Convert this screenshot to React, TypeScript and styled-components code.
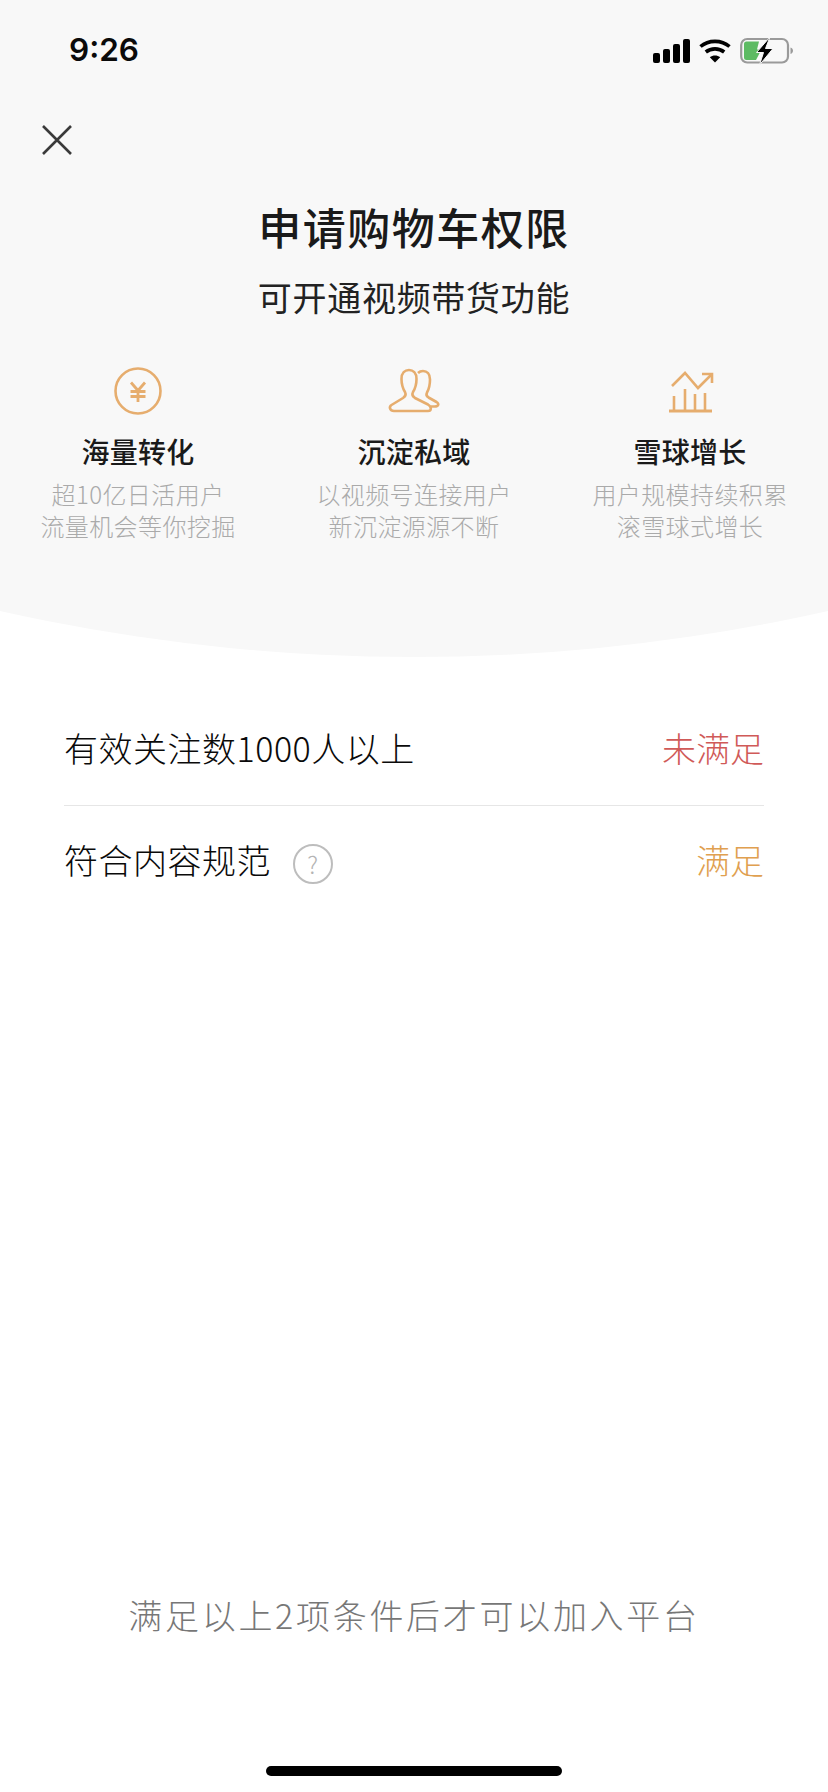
import React from 'react';
import styled, { createGlobalStyle } from 'styled-components';

const CJK = `"Noto Sans CJK SC", "Noto Sans", sans-serif`;
const ORANGE = '#e6ad6e';

const GlobalStyle = createGlobalStyle`
  html, body {
    margin: 0;
    padding: 0;
    background: #fff;
  }
  body {
    font-family: ${CJK};
  }
`;

const Page = styled.div`
  width: 828px;
  height: 1792px;
  background: #fff;
  overflow: hidden;
  display: flex;
  flex-direction: column;
`;

/* the bottom edge is one big circle: sags 46px over the page width */
const Hero = styled.header`
  height: 657px;
  flex-shrink: 0;
  background: #f8f8f8;
  clip-path: circle(1886px at 50% -1229px);
`;

const StatusBar = styled.div`
  height: 100px;
  padding: 31px 34px 0 69px;
  box-sizing: border-box;
  display: flex;
  justify-content: space-between;
  align-items: flex-start;
`;

const Clock = styled.span`
  font-family: Inter, "Liberation Sans", sans-serif;
  font-weight: 600;
  font-size: 31.5px;
  line-height: 38px;
  color: #0a0a0a;
`;

const StatusIcons = styled.div`
  display: flex;
  align-items: center;
  gap: 9px;
  margin-top: 6px;
`;

const CloseButton = styled.button`
  display: block;
  margin: 23px 0 0 40px;
  padding: 0;
  width: 34px;
  height: 34px;
  border: 0;
  background: none;
`;

const Title = styled.h1`
  margin: 37px 0 0;
  text-align: center;
  font-size: 43px;
  line-height: 64px;
  font-weight: 500;
  letter-spacing: 1.5px;
  color: #1a1a1a;
`;

const Subtitle = styled.p`
  margin: 14px 0 0;
  text-align: center;
  font-size: 34px;
  line-height: 50px;
  font-weight: 400;
  letter-spacing: 0.7px;
  color: #222;
`;

const Features = styled.div`
  display: grid;
  grid-template-columns: repeat(3, 276px);
  margin-top: 43px;
`;

const Feature = styled.div`
  display: flex;
  flex-direction: column;
  align-items: center;
`;

const FeatureIcon = styled.svg`
  display: block;
  width: 56px;
  height: 52px;
`;

const FeatureTitle = styled.h2`
  margin: 13px 0 0;
  font-size: 28px;
  line-height: 42px;
  font-weight: 500;
  letter-spacing: 0.2px;
  color: #1a1a1a;
`;

const FeatureText = styled.p`
  margin: 6px 0 0;
  font-size: 24px;
  line-height: 32px;
  font-weight: 300;
  letter-spacing: 0.4px;
  text-align: center;
  color: #aaa;
`;

const Conditions = styled.section`
  margin: 0 64px;
  padding-top: 38px;
`;

const Row = styled.div<{ $divided?: boolean }>`
  height: 111px;
  padding-bottom: 5px;
  display: flex;
  align-items: center;
  justify-content: space-between;
  border-bottom: ${(p) => (p.$divided ? '1px solid #e6e6e6' : '0')};
  box-sizing: border-box;
`;

const RowLabel = styled.div`
  display: flex;
  align-items: center;
  font-size: 34px;
  font-weight: 300;
  letter-spacing: 0.5px;
  color: #0a0a0a;
`;

const HelpIcon = styled.span`
  width: 36px;
  height: 36px;
  margin: 9px 0 0 22px;
  border: 2px solid #bdbdbd;
  border-radius: 50%;
  display: flex;
  align-items: center;
  justify-content: center;
  font-size: 24px;
  line-height: 1;
  color: #b4b4b4;
`;

const Status = styled.span<{ $met?: boolean }>`
  font-size: 34px;
  font-weight: 300;
  color: ${(p) => (p.$met ? '#e0a050' : '#d05a58')};
`;

const Footer = styled.div`
  margin-top: auto;
  padding-bottom: 16px;
  display: flex;
  flex-direction: column;
  align-items: center;
`;

const Hint = styled.p`
  margin: 0 0 126px;
  font-size: 34px;
  line-height: 50px;
  font-weight: 300;
  letter-spacing: 2.7px;
  color: #777;
`;

const HomeBar = styled.div`
  width: 296px;
  height: 10px;
  border-radius: 5px;
  background: #000;
`;

const Signal = () => (
  <svg width="38" height="24" viewBox="0 0 38 24" fill="#000">
    <rect x="1" y="14" width="7" height="10" rx="2" />
    <rect x="11" y="10" width="7" height="14" rx="2" />
    <rect x="21" y="5" width="7" height="19" rx="2" />
    <rect x="31" y="0" width="7" height="24" rx="2" />
  </svg>
);

const Wifi = () => (
  <svg width="32" height="24" viewBox="0 0 32 24" fill="none" stroke="#000" strokeWidth="3.6">
    <path d="M1.5 7.5C9.5 0.6 22.5 0.6 30.5 7.5" />
    <path d="M6.8 13C12 8.8 20 8.8 25.2 13" />
    <path d="M16 23.5L10.8 18.3C13.8 15.8 18.2 15.8 21.2 18.3Z" fill="#000" stroke="none" />
  </svg>
);

const Battery = () => (
  <svg width="54" height="28" viewBox="0 0 54 28" fill="none">
    <rect x="1.2" y="2" width="46.8" height="23.5" rx="6" stroke="#9a9a9a" strokeWidth="2.2" />
    <path d="M4 7a2.5 2.5 0 0 1 2.5-2.5H19l-2 8h4.5L16 23H6.5A2.5 2.5 0 0 1 4 20.5Z" fill="#5dbb63" />
    <path d="M50.5 10.5c1.6.5 2.5 1.7 2.5 3.2s-.9 2.7-2.5 3.2Z" fill="#9a9a9a" />
    <path d="M30 0L16.5 15.5H23.5L19.5 28L33 11.5H25.5Z" fill="#000" stroke="#f8f8f8" strokeWidth="1" />
  </svg>
);

const CloseIcon = () => (
  <svg width="34" height="34" viewBox="0 0 34 34" fill="none" stroke="#3a3a3a" strokeWidth="2.6">
    <path d="M3 3L31 31M31 3L3 31" />
  </svg>
);

const CoinIcon = () => (
  <FeatureIcon viewBox="0 0 56 52" fill="none" stroke={ORANGE} strokeWidth="2.6">
    <circle cx="28" cy="26" r="22.5" />
    <path d="M21 17.5L28 25.5L35 17.5M20.5 26.5H35.5M20.5 31.5H35.5M28 25.5V37" strokeWidth="2.8" />
  </FeatureIcon>
);

const PeopleIcon = () => (
  <FeatureIcon viewBox="0 0 56 52" fill="none" stroke={ORANGE} strokeWidth="2.6" strokeLinejoin="round">
    <path d="M8 46C4 46 2.5 42 5.5 40L17 33C20 31 20 29 19 27C16.5 23 15.5 19 15.5 14C15.5 8 19 5 23 5C27 5 30.5 8 30.5 14C30.5 19 29.5 23 27 27C26 29 26 31 29 33L42 39.5C46 42 45.5 46 42 46Z" />
    <path d="M32 8C33.5 6.5 35 6 37 6C41 6 44 9 44 14.5C44 20 43 24 41 27.5C40 29.5 40 31 42.5 32.5L50.5 37C53.5 39 52.5 41.5 48.5 41.5H44.5" />
  </FeatureIcon>
);

const GrowthIcon = () => (
  <FeatureIcon viewBox="0 0 56 52" fill="none" stroke={ORANGE} strokeWidth="2.6">
    <path d="M10 21L23 8L36 23L50 9" />
    <path d="M40 9H50V18" />
    <path d="M12 31V45M23 24V45M33 29V45M43 28V45" />
    <path d="M7 46H50" strokeWidth="3" />
  </FeatureIcon>
);

const features = [
  { icon: <CoinIcon />, title: '海量转化', lines: ['超10亿日活用户', '流量机会等你挖掘'] },
  { icon: <PeopleIcon />, title: '沉淀私域', lines: ['以视频号连接用户', '新沉淀源源不断'] },
  { icon: <GrowthIcon />, title: '雪球增长', lines: ['用户规模持续积累', '滚雪球式增长'] },
];

export default function App() {
  return (
    <Page>
      <GlobalStyle />
      <Hero>
        <StatusBar>
          <Clock>9:26</Clock>
          <StatusIcons>
            <Signal />
            <Wifi />
            <Battery />
          </StatusIcons>
        </StatusBar>
        <CloseButton aria-label="关闭">
          <CloseIcon />
        </CloseButton>
        <Title>申请购物车权限</Title>
        <Subtitle>可开通视频带货功能</Subtitle>
        <Features>
          {features.map((f) => (
            <Feature key={f.title}>
              {f.icon}
              <FeatureTitle>{f.title}</FeatureTitle>
              <FeatureText>
                {f.lines[0]}
                <br />
                {f.lines[1]}
              </FeatureText>
            </Feature>
          ))}
        </Features>
      </Hero>
      <Conditions>
        <Row $divided>
          <RowLabel>有效关注数1000人以上</RowLabel>
          <Status>未满足</Status>
        </Row>
        <Row>
          <RowLabel>
            符合内容规范
            <HelpIcon>?</HelpIcon>
          </RowLabel>
          <Status $met>满足</Status>
        </Row>
      </Conditions>
      <Footer>
        <Hint>满足以上2项条件后才可以加入平台</Hint>
        <HomeBar />
      </Footer>
    </Page>
  );
}
